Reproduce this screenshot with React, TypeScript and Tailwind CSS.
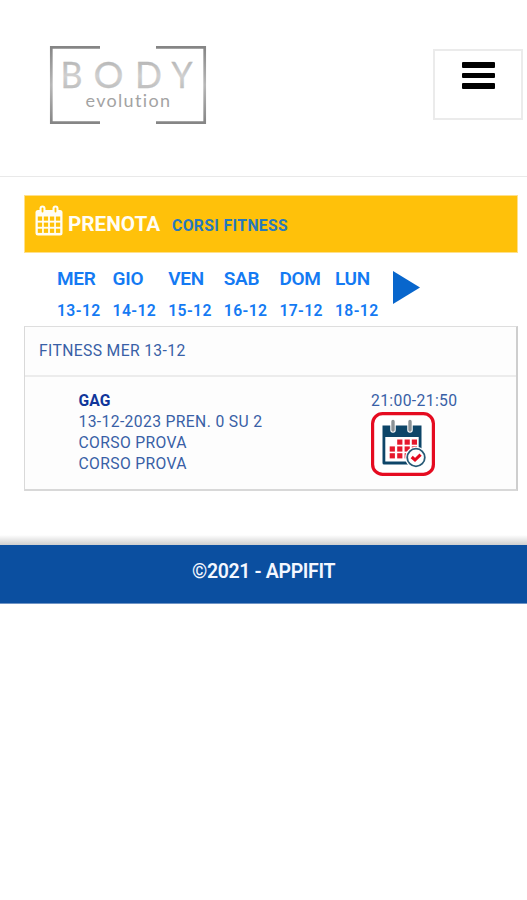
import React from "react";

const days = [
  { name: "MER", date: "13-12" },
  { name: "GIO", date: "14-12" },
  { name: "VEN", date: "15-12" },
  { name: "SAB", date: "16-12" },
  { name: "DOM", date: "17-12" },
  { name: "LUN", date: "18-12" },
];

function Logo() {
  return (
    <svg className="block h-[80px] w-[158px]" viewBox="0 0 158 80">
      <defs>
        <linearGradient id="frame" x1="0" y1="0" x2="0" y2="1">
          <stop offset="0" stopColor="#858585" />
          <stop offset="0.5" stopColor="#b8b8b8" />
          <stop offset="1" stopColor="#858585" />
        </linearGradient>
        <linearGradient id="letters" x1="0" y1="0" x2="0" y2="1">
          <stop offset="0" stopColor="#a8a8a8" />
          <stop offset="0.55" stopColor="#d0d0d0" />
          <stop offset="1" stopColor="#b4b4b4" />
        </linearGradient>
      </defs>
      <path d="M51 2.3H2.3V77.7H51M107 2.3H155.7V77.7H107" fill="none" stroke="url(#frame)" strokeWidth="2.7" />
      <g fill="url(#letters)" stroke="url(#letters)" strokeWidth="0.3" fontFamily="Lato, sans-serif" fontSize="36">
        <text x="11.5" y="43" textLength="22" lengthAdjust="spacingAndGlyphs">B</text>
        <text x="44.5" y="43" textLength="30" lengthAdjust="spacingAndGlyphs">O</text>
        <text x="86" y="43" textLength="27" lengthAdjust="spacingAndGlyphs">D</text>
        <text x="122.5" y="43" textLength="21" lengthAdjust="spacingAndGlyphs">Y</text>
      </g>
      <text className="[font-variant-ligatures:none]" x="36.5" y="62.3" fill="#a3a3a3" fontFamily="Lato, sans-serif" fontSize="18" textLength="84.5">evolution</text>
    </svg>
  );
}

function CalendarIcon() {
  return (
    <svg className="block h-[31px] w-[28px] shrink-0" viewBox="0 0 28 31">
      <rect x="0.5" y="5" width="27" height="25.5" rx="2.5" fill="#fffdf5" />
      <rect x="4.5" y="0.5" width="6" height="8.5" rx="3" fill="#fffdf5" />
      <rect x="17.5" y="0.5" width="6" height="8.5" rx="3" fill="#fffdf5" />
      <rect x="6.6" y="2.5" width="1.8" height="5" rx="0.9" fill="#ffc107" />
      <rect x="19.6" y="2.5" width="1.8" height="5" rx="0.9" fill="#ffc107" />
      <g fill="#ffc107">
        {[2.8, 8.8, 14.9, 20.9].map((x) =>
          [11.5, 17.6, 23.7].map((y) => <rect key={`${x}-${y}`} x={x} y={y} width="4.3" height="4.2" />)
        )}
      </g>
    </svg>
  );
}

function BookingIcon() {
  return (
    <svg className="block h-[64px] w-[64px]" viewBox="0 0 64 64">
      <rect x="1.6" y="1.6" width="60.8" height="60.8" rx="10" fill="#fff" stroke="#e50b20" strokeWidth="3.2" />
      <path d="M11.5 13.5h39v37.5a1.5 1.5 0 0 1-1.5 1.5h-36a1.5 1.5 0 0 1-1.5-1.5z" fill="#0d4568" />
      <path d="M14.3 25h33.4v24.5H14.3z" fill="#fff" />
      <g fill="#e6182c">
        {[26.2, 33.6, 40.8].map((x) => <rect key={x} x={x} y="27.5" width="5.2" height="5.2" />)}
        {[18.7, 26.2, 33.6, 40.8].map((x) => <rect key={x} x={x} y="34.4" width="5.2" height="5.2" />)}
        {[18.7, 26.2, 33.6].map((x) => <rect key={x} x={x} y="41.2" width="5.2" height="5.2" />)}
      </g>
      <path d="M22 9.5V18M39 9.5V18" stroke="#fff" strokeWidth="5.5" strokeLinecap="round" />
      <path d="M22 9.5V18M39 9.5V18" stroke="#8b9296" strokeWidth="3.4" strokeLinecap="round" />
      <circle cx="45" cy="45.5" r="10.8" fill="#fff" />
      <circle cx="45" cy="45.5" r="8.8" fill="#fff" stroke="#285a76" strokeWidth="1.8" />
      <path d="M40.7 45l3.3 3 5.6-5.4" fill="none" stroke="#e50b20" strokeWidth="3.1" />
    </svg>
  );
}

export default function App() {
  return (
    <div className="h-[900px] w-[527px] overflow-hidden bg-white font-['Roboto',sans-serif]">
      <header className="flex h-[177px] items-start justify-between border-b border-[#e9e9e9] pl-[49px] pr-[4px]">
        <div className="pt-[45px]"><Logo /></div>
        <button className="mt-[49px] flex h-[71px] w-[90px] justify-center border-2 border-[#ebebeb] bg-white pt-[10px]" aria-label="Menu">
          <span className="flex w-[33px] flex-col gap-[5px] pt-[1px]">
            <span className="h-[5.6px] rounded-[1px] bg-black" />
            <span className="h-[5.6px] rounded-[1px] bg-black" />
            <span className="h-[5.6px] rounded-[1px] bg-black" />
          </span>
        </button>
      </header>

      <main className="ml-[24px] mr-[9px] pt-[18px]">
        <div className="flex h-[58px] items-start border border-[#ffe08a] bg-[#ffc10a] pl-[10px] pt-[9px]">
          <CalendarIcon />
          <span className="ml-[5px] mt-[4px] text-[20.7px] leading-[30px] font-bold text-[#fffdf5]">PRENOTA</span>
          <span className="ml-[12px] mt-[6px] text-[15.6px] leading-[30px] font-bold tracking-[0.42px] text-[#2779bd]">CORSI FITNESS</span>
        </div>

        <div className="flex h-[73px] items-start pl-[33px] text-[#147af3]">
          {days.map((d) => (
            <div key={d.name} className="w-[55.6px] shrink-0 whitespace-nowrap">
              <div className="mt-[10px] text-[19px] leading-[32px] font-semibold tracking-[-0.3px]">{d.name}</div>
              <div className="text-[15.7px] leading-[32px] font-semibold tracking-[0.4px]">{d.date}</div>
            </div>
          ))}
          <svg className="mt-[17px] ml-px h-[35px] w-[29px] shrink-0" viewBox="0 0 29 35">
            <path d="M1 1L28 17.5L1 34Z" fill="#0866cc" />
          </svg>
        </div>

        <section className="h-[165px] border border-r-2 border-b-2 border-t-[#dedede] border-r-[#cecece] border-b-[#d8d8d8] border-l-[#d9d9d9] bg-[#fdfdfd] text-[15.7px] tracking-[0.36px] text-[#3860a6]">
          <div className="h-[50px] border-b-2 border-[#ececec] pl-[14px] leading-[47px]">FITNESS MER 13-12</div>
          <div className="flex pt-[13px] pl-[53.5px]">
            <div className="w-[292.5px] leading-[21px]">
              <div className="font-bold tracking-[0.1px] text-[#10369a]">GAG</div>
              <div>13-12-2023 PREN. 0 SU 2</div>
              <div>CORSO PROVA</div>
              <div>CORSO PROVA</div>
            </div>
            <div className="leading-[21px]">
              <div>21:00-21:50</div>
              <div className="mt-px"><BookingIcon /></div>
            </div>
          </div>
        </section>
      </main>

      <div className="mt-[44px] h-[10px] bg-linear-to-b from-white to-[#cfcfcf]" />
      <footer className="h-[59px] border-b border-[#6f94c5] bg-[#0b4fa0] text-center text-[19.5px] leading-[53px] font-semibold tracking-[-0.35px] text-[#f4f7ff]">
        ©2021 - APPIFIT
      </footer>
    </div>
  );
}
